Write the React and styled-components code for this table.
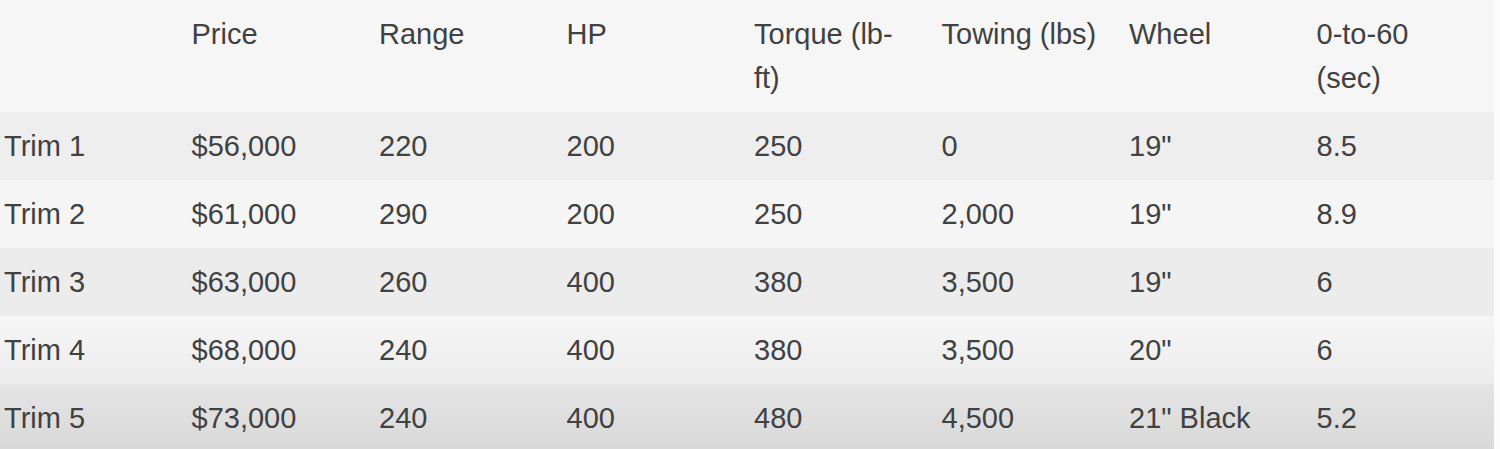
import React from 'react';
import styled, { createGlobalStyle } from 'styled-components';

const GlobalStyle = createGlobalStyle`
  html, body {
    margin: 0;
    padding: 0;
    background: #fbfbfb;
  }
  body {
    font-family: 'Liberation Sans', Arial, sans-serif;
    color: #414141;
  }
`;

const Page = styled.div`
  width: 1500px;
  height: 449px;
  overflow: hidden;
`;

const Table = styled.table`
  width: 1494px;
  border-collapse: collapse;
  table-layout: fixed;
  font-size: 29px;
`;

const HeadRow = styled.tr`
  background: #f6f6f6;
  height: 112px;
`;

const HeadCell = styled.th`
  text-align: left;
  font-weight: normal;
  vertical-align: top;
  padding: 12px 0 0 4px;
  line-height: 44px;
  white-space: pre-line;
`;

const Row = styled.tr`
  height: 68px;
  background: ${({ $bg }) => $bg};
`;

const Cell = styled.td`
  padding: 0 0 0 4px;
  vertical-align: middle;
  line-height: 44px;
  white-space: nowrap;
`;

const headers = ['', 'Price', 'Range', 'HP', 'Torque (lb-\nft)', 'Towing (lbs)', 'Wheel', '0-to-60\n(sec)'];

const rows = [
  { bg: '#eeeeee', cells: ['Trim 1', '$56,000', '220', '200', '250', '0', '19"', '8.5'] },
  { bg: '#f5f5f5', cells: ['Trim 2', '$61,000', '290', '200', '250', '2,000', '19"', '8.9'] },
  { bg: '#ececec', cells: ['Trim 3', '$63,000', '260', '400', '380', '3,500', '19"', '6'] },
  { bg: 'linear-gradient(#f6f6f6, #ececec)', cells: ['Trim 4', '$68,000', '240', '400', '380', '3,500', '20"', '6'] },
  { bg: 'linear-gradient(#e4e4e4, #d9d9d9)', cells: ['Trim 5', '$73,000', '240', '400', '480', '4,500', '21" Black', '5.2'] },
];

const widths = [187.5, 187.5, 187.5, 187.5, 187.5, 187.5, 187.5, 181.5];

export default function App() {
  return (
    <Page>
      <GlobalStyle />
      <Table>
        <colgroup>
          {widths.map((w, i) => (
            <col key={i} style={{ width: w }} />
          ))}
        </colgroup>
        <thead>
          <HeadRow>
            {headers.map((h, i) => (
              <HeadCell key={i}>{h}</HeadCell>
            ))}
          </HeadRow>
        </thead>
        <tbody>
          {rows.map((r) => (
            <Row key={r.cells[0]} $bg={r.bg}>
              {r.cells.map((c, i) => (
                <Cell key={i}>{c}</Cell>
              ))}
            </Row>
          ))}
        </tbody>
      </Table>
    </Page>
  );
}
